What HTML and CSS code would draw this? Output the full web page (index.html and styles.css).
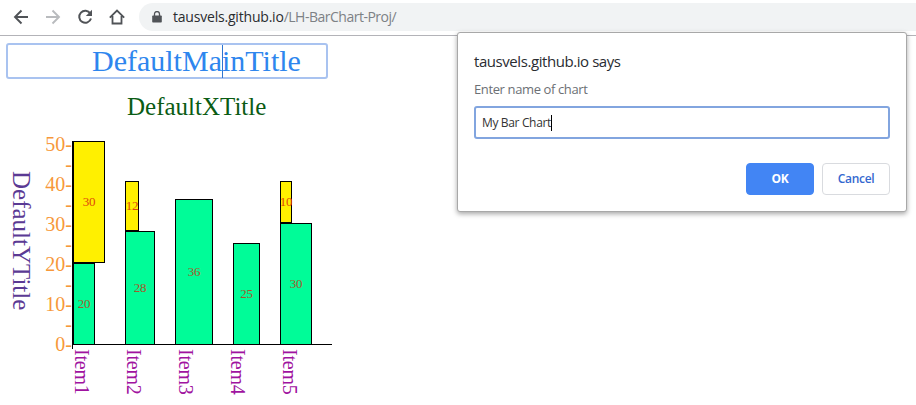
FILE: index.html
```html
<!DOCTYPE html>
<html lang="en">
<head>
<meta charset="utf-8">
<title>LH-BarChart-Proj</title>
<link rel="stylesheet" href="styles.css">
</head>
<body>
<header class="toolbar">
  <nav class="nav">
    <svg width="16" height="16" viewBox="0 0 16 16" fill="none" stroke="#505357" stroke-width="1.9"><path d="M15 8H2.5M8.5 1.5L2 8l6.5 6.5"/></svg>
    <svg width="16" height="16" viewBox="0 0 16 16" fill="none" stroke="#b9bbbe" stroke-width="1.9"><path d="M1 8h12.5M7.500 1.500L14 8l-6.500 6.500"/></svg>
    <svg width="16" height="16" viewBox="0 0 16 16"><path d="M13.300 4.500A6 6 0 1 0 14 9.500" fill="none" stroke="#505357" stroke-width="2"/><path d="M15 .8V7H8.800z" fill="#505357"/></svg>
    <svg width="16" height="16" viewBox="0 0 16 16" fill="none" stroke="#505357" stroke-width="1.800"><path d="M.8 8.600L8 1.600l7.200 7M3.500 7v7.500h9V7"/></svg>
  </nav>
  <div class="address">
    <svg width="10" height="12" viewBox="0 0 10 12"><path d="M1 4.500h8q.8 0 .8.800v5.400q0 .8-.8.800H1q-.8 0-.8-.8V5.300q0-.8.8-.8z" fill="#505357"/><path d="M2.500 5V3a2.500 2.500 0 0 1 5 0v2" fill="none" stroke="#505357" stroke-width="1.300"/></svg>
    <span class="url">tausvels.github.io<span class="path">/LH-BarChart-Proj/</span></span>
  </div>
</header>

<main class="page">
  <div class="main-title">DefaultMa<i class="caret"></i>inTitle</div>
  <div class="x-title">DefaultXTitle</div>
  <div class="chart">
    <div class="y-title">DefaultYTitle</div>
    <div class="scale">
      <span>50-</span><span>-</span><span>40-</span><span>-</span><span>30-</span><span>-</span><span>20-</span><span>-</span><span>10-</span><span>-</span><span>0-</span>
    </div>
    <div class="plot">
      <div class="bars">
        <div class="stack">
          <div class="bar top first" style="width:33px;height:122px">30</div>
          <div class="bar first" style="width:23px;height:82px">20</div>
        </div>
        <div class="stack">
          <div class="bar top" style="width:14px;height:50px">12</div>
          <div class="bar" style="width:30px;height:114px">28</div>
        </div>
        <div class="stack">
          <div class="bar" style="width:38px;height:146px">36</div>
        </div>
        <div class="stack">
          <div class="bar" style="width:27px;height:102px">25</div>
        </div>
        <div class="stack">
          <div class="bar top" style="width:12px;height:42px">10</div>
          <div class="bar" style="width:32px;height:122px">30</div>
        </div>
      </div>
      <div class="items">
        <span>Item1</span><span>Item2</span><span>Item3</span><span>Item4</span><span>Item5</span>
      </div>
    </div>
  </div>
</main>

<section class="dialog">
  <div class="heading">tausvels.github.io says</div>
  <div class="message">Enter name of chart</div>
  <div class="field">My Bar Chart<i class="cursor"></i></div>
  <div class="actions">
    <div class="button primary">OK</div>
    <div class="button">Cancel</div>
  </div>
</section>
</body>
</html>
```
FILE: styles.css
```css
* { box-sizing: border-box; }
body {
  margin: 0;
  width: 916px;
  height: 405px;
  overflow: hidden;
  background: #fff;
  font-family: "Liberation Serif", serif;
}
.toolbar {
  display: flex;
  height: 36px;
  padding: 3px 0 4px 13px;
  border-bottom: 1px solid #b3b3b8;
  font-family: "Open Sans", sans-serif;
}
.nav {
  display: flex;
  align-items: center;
  gap: 16px;
  width: 126px;
}
.address {
  display: flex;
  flex: 1;
  align-items: center;
  gap: 11px;
  height: 28px;
  padding-left: 13px;
  border-radius: 14px 0 0 14px;
  background: #f1f3f4;
}
.url {
  font-size: 14px;
  line-height: 28px;
  color: #2a2c2f;
  letter-spacing: -0.2px;
}
.path { color: #7d8185; letter-spacing: -0.5px; }

.page { padding: 7px 0 0 6px; }
.main-title {
  width: 322px;
  height: 36px;
  padding-left: 84px;
  border: 2px solid #a9c3f0;
  border-radius: 3px;
  color: #2e86ee;
  font-size: 30px;
  line-height: 32px;
  white-space: nowrap;
}
.caret {
  display: inline-block;
  width: 1px;
  height: 33px;
  margin-right: -1px;
  background: #2e75d0;
  vertical-align: top;
}
.x-title {
  height: 55px;
  padding: 13px 0 0 121px;
  color: #0b5c14;
  font-size: 25px;
  line-height: 29px;
}
.chart { display: flex; }
.y-title {
  width: 31px;
  padding-top: 37px;
  color: #5b3a94;
  font-size: 25px;
  line-height: 31px;
  writing-mode: vertical-rl;
}
.scale {
  display: flex;
  flex-direction: column;
  width: 35px;
  color: #f7983a;
  font-size: 20px;
  line-height: 20px;
  text-align: right;
}
.plot {
  display: flex;
  flex-direction: column;
  padding-top: 7px;
}
.bars {
  display: flex;
  align-items: flex-end;
  gap: 20px;
  width: 260px;
  height: 204px;
  background: linear-gradient(#000, #000) bottom / 100% 1px no-repeat;
}
.stack { display: flex; flex-direction: column; }
.stack:first-child { width: 33px; }
.bar {
  display: flex;
  align-items: center;
  justify-content: center;
  padding-bottom: 2px;
  border: 1px solid #000;
  background: #00fc98;
  color: #a5582c;
  font-size: 13px;
  line-height: 15px;
  letter-spacing: -0.3px;
}
.top { background: #fff000; color: #e0480c; }
.first { border-left-width: 2px; }
.items {
  display: flex;
  padding: 4px 0 0 0;
  background: linear-gradient(#000, #000) left top / 1px 4px no-repeat;
}
.items span {
  width: 52px;
  display: block;
  height: 52px;
  padding-right: 32px;
  color: #a013a0;
  font-size: 20px;
  line-height: 20px;
  letter-spacing: -0.2px;
  writing-mode: vertical-rl;
}

.dialog {
  position: absolute;
  left: 457px;
  top: 32px;
  width: 450px;
  height: 180px;
  padding: 16px 16px 0;
  border: 1px solid #a8a8a8;
  border-radius: 3px;
  background: #fff;
  box-shadow: 0 2px 5px rgba(0, 0, 0, .35);
  font-family: "Open Sans", sans-serif;
}
.heading {
  height: 24px;
  color: #2a2c31;
  font-size: 15px;
  line-height: 24px;
  letter-spacing: -0.43px;
}
.message {
  height: 33px;
  padding-top: 6px;
  color: #6c7075;
  font-size: 13px;
  line-height: 20px;
  letter-spacing: -0.38px;
}
.field {
  display: flex;
  align-items: center;
  height: 33px;
  padding: 0 6px;
  border: 2px solid #82a5df;
  border-radius: 3px;
  color: #333;
  font-size: 12px;
  letter-spacing: -0.35px;
}
.cursor { width: 1px; height: 16px; background: #000; }
.actions {
  display: flex;
  justify-content: flex-end;
  gap: 8px;
  padding-top: 24px;
}
.button {
  width: 68px;
  height: 32px;
  border: 1px solid #d9dbdf;
  border-radius: 4px;
  color: #3468cf;
  font-size: 12px;
  font-weight: 600;
  line-height: 30px;
  letter-spacing: -0.3px;
  text-align: center;
}
.primary {
  border-color: #4285f4;
  background: #4285f4;
  color: #fff;
  font-weight: 700;
}
```
